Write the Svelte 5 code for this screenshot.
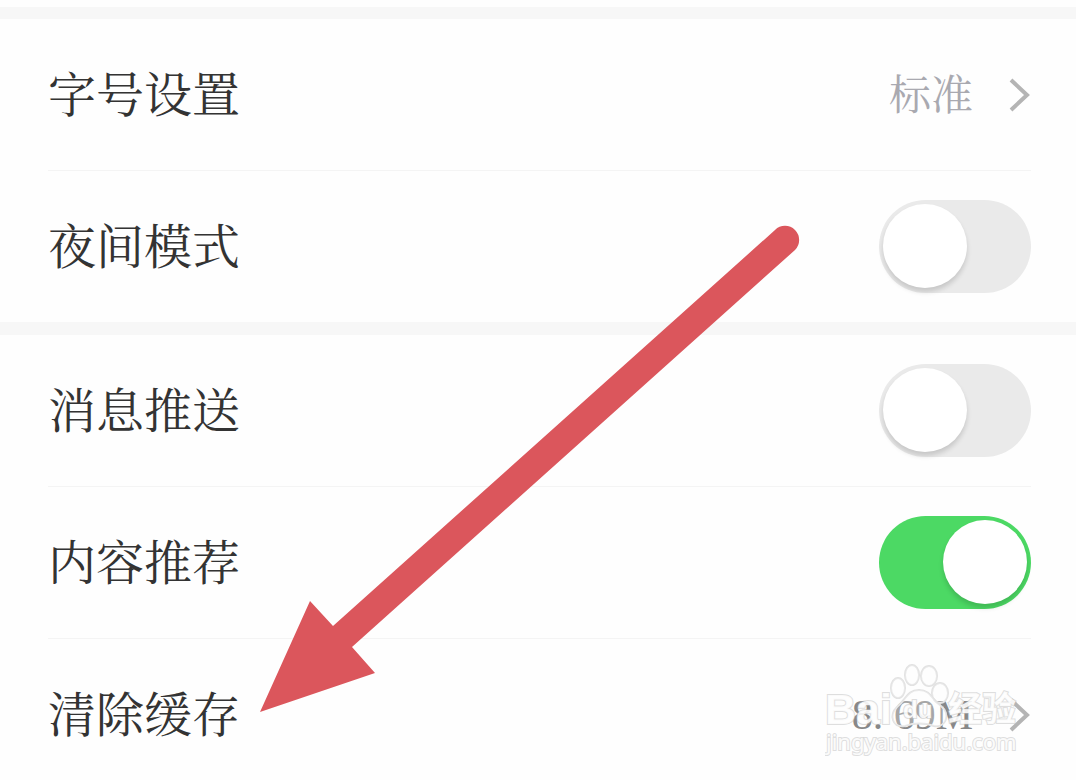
<script>
    let nightMode = $state(false);
    let push = $state(false);
    let recommend = $state(true);
</script>

{#snippet chevron()}
    <svg class="chevron" viewBox="0 0 22 34" aria-hidden="true">
        <path d="M2 2 18 17 2 32" />
    </svg>
{/snippet}

<main class="settings">
    <section class="group">
        <a class="row" href="#font-size">
            <span class="label">字号设置</span>
            <span class="value">标准</span>
            {@render chevron()}
        </a>
        <div class="row">
            <label class="label" for="night">夜间模式</label>
            <input id="night" class="switch" type="checkbox" bind:checked={nightMode}>
        </div>
    </section>

    <section class="group">
        <div class="row">
            <label class="label" for="push">消息推送</label>
            <input id="push" class="switch" type="checkbox" bind:checked={push}>
        </div>
        <div class="row">
            <label class="label" for="recommend">内容推荐</label>
            <input id="recommend" class="switch" type="checkbox" bind:checked={recommend}>
        </div>
        <a class="row" href="#clear-cache">
            <span class="label">清除缓存</span>
            <span class="value size">8. 69M</span>
            {@render chevron()}
        </a>
    </section>

    <svg class="arrow" viewBox="0 0 540 490" aria-hidden="true">
        <path d="M0 489 50 378 73 403 515 7A14 14 0 0 1 535 27L92 424 115 450Z" />
    </svg>

    <svg class="watermark" viewBox="0 0 200 100" aria-hidden="true">
        <g class="mark">
            <text class="brand" x="0" y="62">Bai</text>
            <ellipse cx="73" cy="26" rx="7" ry="10" />
            <ellipse cx="87" cy="13" rx="7" ry="10" />
            <ellipse cx="104" cy="14" rx="8" ry="10" />
            <ellipse cx="115" cy="31" rx="8" ry="10" />
            <path d="M94 28C106 28 107 38 116 44C126 52 121 66 109 64C100 61 89 61 80 64C67 66 64 53 72 45C81 38 82 28 94 28Z" />
            <text class="du" x="78" y="56">du</text>
            <text class="cjk" x="123" y="59">经验</text>
            <text class="url" x="1" y="88">jingyan.baidu.com</text>
        </g>
    </svg>
</main>

<style>
    :global(body) {
        background: #fefefe;
    }

    .settings {
        box-sizing: border-box;
        color: #333;
        font-family: "Noto Serif CJK SC", "Noto Serif SC", "Source Han Serif SC", "Liberation Serif", "Noto Sans CJK SC", serif;
        height: 100vh;
        overflow: hidden;
        padding-top: 7px;
        position: relative;
    }

    .group {
        border-top: 12px solid #f7f7f7;
        padding: 0 45px 0 48px;
    }
    .group + .group {
        border-top-width: 13px;
    }

    .row {
        align-items: center;
        border-bottom: 1px solid #f4f4f4;
        color: inherit;
        display: flex;
        height: 151px;
        text-decoration: none;
    }
    .row:last-child {
        border-bottom: 0;
    }

    .label {
        flex: 1;
        font-size: 48px;
        line-height: 64px;
        padding-bottom: 6px;
    }

    .value {
        color: #a9a9b0;
        font-size: 42px;
        line-height: 56px;
        padding-bottom: 6px;
    }
    .size {
        color: #888;
        font-family: "Liberation Serif", serif;
        padding-bottom: 0;
    }

    .chevron {
        fill: none;
        height: 34px;
        margin-left: 36px;
        stroke: #b4b4b4;
        stroke-width: 4;
        width: 22px;
    }

    .switch {
        appearance: none;
        background: #eaeaea;
        border-radius: 47px;
        height: 93px;
        margin: 0;
        padding: 4px;
        width: 152px;
    }
    .switch:before {
        background: #fff;
        border-radius: 50%;
        box-shadow: 0 4px 5px rgba(0, 0, 0, 0.15);
        content: '';
        display: block;
        height: 84px;
        width: 84px;
    }
    .switch:checked {
        background: #4cd964;
    }
    .switch:checked:before {
        margin-left: auto;
    }

    .arrow {
        fill: #db565c;
        height: 490px;
        left: 260px;
        pointer-events: none;
        position: absolute;
        top: 223px;
        width: 540px;
    }

    .watermark {
        bottom: 18px;
        height: 100px;
        pointer-events: none;
        position: absolute;
        right: 51px;
        width: 200px;
    }
    .mark {
        fill: rgba(255, 255, 255, 0.25);
        paint-order: stroke;
        stroke: #e2e2e2;
        stroke-width: 2;
    }
    .mark text {
        fill: rgba(255, 255, 255, 0.9);
        stroke: rgba(190, 190, 190, 0.5);
    }
    .brand {
        font: bold 43px "Liberation Sans", sans-serif;
    }
    .du {
        font: bold 24px "Liberation Sans", sans-serif;
    }
    .cjk {
        font: bold 34px "Noto Sans CJK SC", sans-serif;
    }
    .url {
        font: 22px "Noto Sans", sans-serif;
    }
</style>
